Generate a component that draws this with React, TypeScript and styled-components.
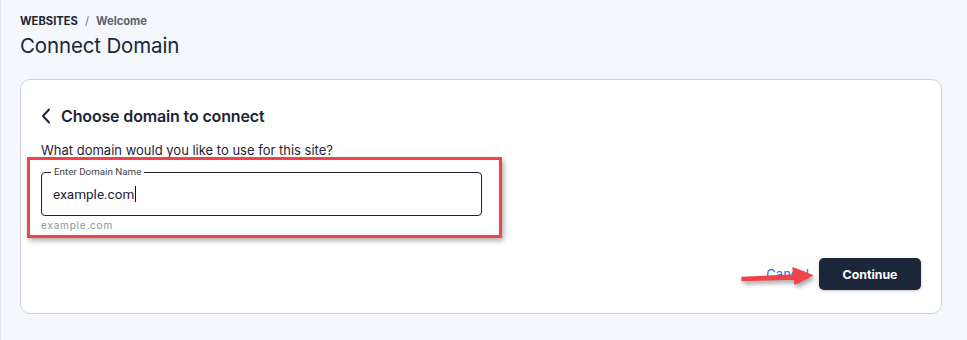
import React from "react";
import styled, { createGlobalStyle } from "styled-components";

const GlobalStyle = createGlobalStyle`
  html, body {
    margin: 0;
    padding: 0;
    background: #f4f7fb;
    font-family: Inter, "Liberation Sans", Arial, sans-serif;
  }
`;

const Page = styled.div`
  min-height: 340px;
  box-sizing: border-box;
  border-left: 1px solid #dfe3e8;
  padding: 14px 25px 0 19px;
`;

const Breadcrumb = styled.div`
  display: flex;
  align-items: center;
  gap: 7px;
  font-size: 11.2px;
  font-weight: 700;
  line-height: 14px;
  color: #1f2433;
`;

const CrumbSep = styled.span`
  color: #6b7280;
  font-weight: 400;
`;

const CrumbCurrent = styled.span`
  color: #5d6270;
`;

const Title = styled.h1`
  margin: 5px 0 0;
  font-size: 20.5px;
  font-weight: 400;
  line-height: 26px;
  color: #1c2536;
  letter-spacing: -0.15px;
`;

const Card = styled.div`
  position: relative;
  margin-top: 20px;
  background: #fff;
  border: 1px solid #cfd3d9;
  border-radius: 10px;
  padding: 25px 20px 24px 20px;
  height: 235px;
  box-sizing: border-box;
`;

const CardHeader = styled.div`
  display: flex;
  align-items: center;
  gap: 10px;
  font-size: 16px;
  font-weight: 600;
  color: #1c2536;
  line-height: 22px;
  letter-spacing: -0.15px;
`;

const Question = styled.p`
  margin: 14px 0 0;
  font-size: 13px;
  line-height: 18px;
  color: #1f2433;
`;

const Fieldset = styled.fieldset`
  margin: 7px 0 0;
  width: 441px;
  height: 50px;
  box-sizing: border-box;
  border: 1px solid #1f2433;
  border-radius: 4px;
  padding: 0 11px;
`;

const Legend = styled.legend`
  font-family: Roboto, "Liberation Sans", Arial, sans-serif;
  font-size: 9.8px;
  line-height: 12px;
  color: #3b3f4a;
  padding: 0 3px;
  margin-left: -2px;
`;

const InputText = styled.div`
  display: flex;
  align-items: center;
  font-family: Roboto, "Liberation Sans", Arial, sans-serif;
  font-size: 13.5px;
  color: #1f2433;
  height: 26px;
  margin-top: 3px;
`;

const Caret = styled.span`
  display: inline-block;
  width: 1px;
  height: 16px;
  background: #111;
  margin-left: 1px;
`;

const Helper = styled.div`
  margin-top: 3px;
  font-size: 10px;
  letter-spacing: 0.8px;
  color: #8e939b;
`;

const Actions = styled.div`
  display: flex;
  justify-content: flex-end;
  align-items: center;
  gap: 10px;
  margin-top: 27px;
`;

const CancelLink = styled.a`
  font-size: 13px;
  color: #2f6fdc;
  text-decoration: none;
`;

const PrimaryButton = styled.button`
  width: 102px;
  height: 32px;
  border: none;
  border-radius: 5px;
  background: #1c2639;
  color: #fff;
  font-family: inherit;
  font-size: 12.3px;
  font-weight: 700;
  box-shadow: 0 1px 3px rgba(0, 0, 0, 0.25);
`;

const Highlight = styled.div`
  position: absolute;
  left: 6px;
  top: 77px;
  width: 475px;
  height: 81px;
  box-sizing: border-box;
  border: 3px solid #f0444a;
  box-shadow: 2px 3px 5px rgba(0, 0, 0, 0.3);
  pointer-events: none;
`;

const ArrowMark = styled.svg`
  position: absolute;
  left: 717px;
  top: 184px;
  filter: drop-shadow(2px 3px 2px rgba(0, 0, 0, 0.35));
`;

function ChevronLeft() {
  return (
    <svg width="10" height="16" viewBox="0 0 10 16" fill="none">
      <path d="M8 1.5L2 8l6 6.5" stroke="#1c2536" strokeWidth="2" strokeLinecap="round" strokeLinejoin="round" />
    </svg>
  );
}

export default function App() {
  return (
    <>
      <GlobalStyle />
      <Page>
        <Breadcrumb>
          <span>WEBSITES</span>
          <CrumbSep>/</CrumbSep>
          <CrumbCurrent>Welcome</CrumbCurrent>
        </Breadcrumb>
        <Title>Connect Domain</Title>
        <Card>
          <CardHeader>
            <ChevronLeft />
            Choose domain to connect
          </CardHeader>
          <Question>What domain would you like to use for this site?</Question>
          <Fieldset>
            <Legend>Enter Domain Name</Legend>
            <InputText>
              example.com
              <Caret />
            </InputText>
          </Fieldset>
          <Helper>example.com</Helper>
          <Actions>
            <CancelLink href="#">Cancel</CancelLink>
            <PrimaryButton>Continue</PrimaryButton>
          </Actions>
          <Highlight />
          <ArrowMark width="80" height="24" viewBox="0 0 80 24">
            <path d="M4 13.5 L56 11 L55 4 L74 11.5 L57 20 L56.5 15 L4 16.5 Z" fill="#f0444a" stroke="#f0444a" strokeWidth="1.5" strokeLinejoin="round" />
          </ArrowMark>
        </Card>
      </Page>
    </>
  );
}
